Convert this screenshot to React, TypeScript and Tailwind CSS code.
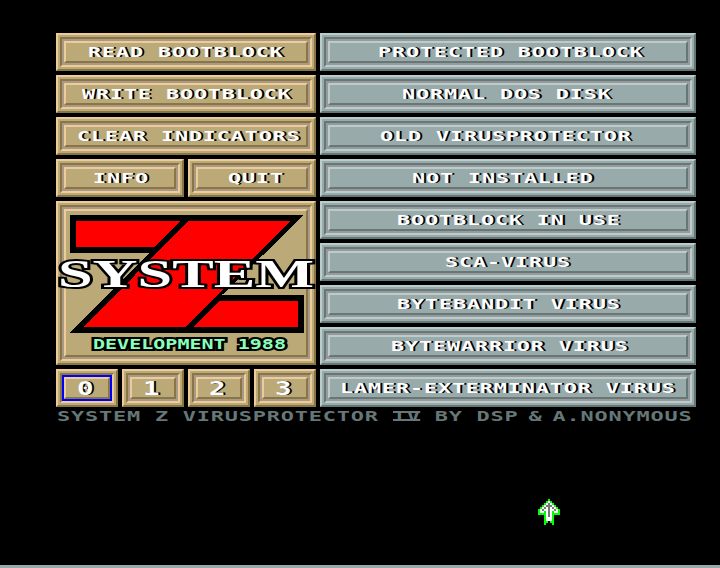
import React from "react";

type Tone = "tan" | "gray";

const tones = {
  tan: {
    r1: "border-t-[#eecc99] border-l-[#eecc99] border-b-[#887744] border-r-[#887744]",
    r2: "border-[#bbaa77]",
    r3: "border-t-[#887744] border-l-[#887744] border-b-[#eecc99] border-r-[#eecc99]",
    r4: "border-[#aa9988]",
    fill: "bg-[#bbaa77]",
  },
  gray: {
    r1: "border-t-[#bbcccc] border-l-[#bbcccc] border-b-[#667777] border-r-[#667777]",
    r2: "border-[#99aaaa]",
    r3: "border-t-[#667777] border-l-[#667777] border-b-[#bbcccc] border-r-[#bbcccc]",
    r4: "border-[#999999]",
    fill: "bg-[#99aaaa]",
  },
};

function Bevel({ tone, className, selected, children }: { tone: Tone; className: string; selected?: boolean; children: React.ReactNode }) {
  const t = tones[tone];
  return (
    <div className={`flex shrink-0 border-2 ${t.r1} ${className}`}>
      <div className={`flex min-w-0 flex-1 border-2 ${t.r2}`}>
        <div className={`flex min-w-0 flex-1 border-2 ${t.r3}`}>
          <div className={`flex min-w-0 flex-1 border-2 ${selected ? "border-[#0000ff]" : t.r4}`}>
            <div className={`flex min-w-0 flex-1 border-2 ${t.r1} ${t.fill}`}>{children}</div>
          </div>
        </div>
      </div>
    </div>
  );
}

const pixelFont =
  "w-max origin-left scale-x-[1.6] whitespace-pre font-['DejaVu_Sans_Mono',monospace] text-[13.7px] font-bold tracking-[0.5px]";

function Label({ pad, children }: { pad: number; children: string }) {
  return (
    <div className="h-[18px] w-0" style={{ paddingLeft: pad }}>
      <span className={`block ${pixelFont} leading-[18px] text-white [text-shadow:0.6px_0_0_#000,1.3px_0_0_#000]`}>{children}</span>
    </div>
  );
}

const actions = [
  { text: "READ BOOTBLOCK", pad: 21.5 },
  { text: "WRITE BOOTBLOCK", pad: 15.5 },
  { text: "CLEAR INDICATORS", pad: 11 },
];

const indicators = [
  { text: "PROTECTED BOOTBLOCK", pad: 47.5 },
  { text: "NORMAL DOS DISK", pad: 71.5 },
  { text: "OLD VIRUSPROTECTOR", pad: 49.5 },
  { text: "NOT INSTALLED", pad: 81.5 },
  { text: "BOOTBLOCK IN USE", pad: 67 },
  { text: "SCA-VIRUS", pad: 115 },
  { text: "BYTEBANDIT VIRUS", pad: 67 },
  { text: "BYTEWARRIOR VIRUS", pad: 61 },
  { text: "LAMER-EXTERMINATOR VIRUS", pad: 10 },
];

function Logo() {
  return (
    <svg className="-m-[10px] h-[164px] w-[260px] shrink-0 overflow-visible" viewBox="56 201 260 164" shapeRendering="crispEdges">
      <path d="M70 215H304L222 295H304V333H70L149 253H70Z" fill="#000" />
      <path d="M76 221H180L154 247H76Z" fill="#f00" />
      <path d="M188 221H290L186 327H84Z" fill="#f00" />
      <path d="M219 301H298V327H194Z" fill="#f00" />
      <text x="58" y="287" textLength="256" lengthAdjust="spacingAndGlyphs" className="font-['Liberation_Serif',serif] text-[40px] font-bold" fill="#fff" stroke="#000" strokeWidth="4" strokeLinejoin="miter" strokeMiterlimit="2" paintOrder="stroke">SYSTEM</text>
      <text x="93" y="349" textLength="193" lengthAdjust="spacingAndGlyphs" className="font-['DejaVu_Sans_Mono',monospace] text-[13.7px] font-bold" fill="#88ffbb" stroke="#000" strokeWidth="4" paintOrder="stroke">DEVELOPMENT 1988</text>
    </svg>
  );
}

const pointerRows = [
  ".....g.....",
  "....gwg....",
  "...gwxwg...",
  "..gwxxxwg..",
  ".gwxwxwxwg.",
  "gwxwwxwwxwg",
  "gwwgwxwgwwg",
  "ggggwxwgggg",
  "...gwxwg...",
  "...gwwwg...",
  "...gwwwg...",
  "...gg.gg...",
  "...g...g...",
];
const pointerInk: Record<string, string> = { g: "#00ff00", w: "#ffffff", x: "#777777" };

function Pointer() {
  return (
    <svg className="h-[26px] w-[22px]" viewBox="0 0 11 13" shapeRendering="crispEdges">
      {pointerRows.flatMap((row, y) =>
        row.split("").map((c, x) => (c in pointerInk ? <rect key={`${x}-${y}`} x={x} y={y} width="1" height="1" fill={pointerInk[c]} /> : null)),
      )}
    </svg>
  );
}

export default function App() {
  return (
    <div className="flex h-[568px] w-[720px] flex-col overflow-hidden bg-black pt-[33px]">
      <main className="flex gap-1 pl-14">
        <section className="flex w-[260px] flex-col gap-1">
          {actions.map((a) => (
            <Bevel key={a.text} tone="tan" className="h-[38px]"><Label pad={a.pad}>{a.text}</Label></Bevel>
          ))}
          <div className="flex gap-1">
            <Bevel tone="tan" className="h-[38px] w-32"><Label pad={27}>INFO</Label></Bevel>
            <Bevel tone="tan" className="h-[38px] w-32"><Label pad={29.5}>QUIT</Label></Bevel>
          </div>
          <Bevel tone="tan" className="h-[164px]"><Logo /></Bevel>
          <div className="flex gap-1">
            {["0", "1", "2", "3"].map((n) => (
              <Bevel key={n} tone="tan" className="h-[38px] w-[62px]" selected={n === "0"}>
                <div className="w-0 pl-[11px]">
                  <span className="block w-max origin-left scale-x-[1.45] font-['DejaVu_Sans_Mono',monospace] text-[19px] leading-[18px] font-bold text-white [text-shadow:0.6px_0_0_#000,1.3px_0_0_#000]">{n}</span>
                </div>
              </Bevel>
            ))}
          </div>
        </section>
        <section className="flex w-[376px] flex-col gap-1">
          {indicators.map((i) => (
            <Bevel key={i.text} tone="gray" className="h-[38px]"><Label pad={i.pad}>{i.text}</Label></Bevel>
          ))}
        </section>
      </main>
      <div className="h-[18px] pl-[57px]">
        <div className={`flex items-center ${pixelFont} leading-[18px] text-[#667777]`}>
          <span>SYSTEM Z VIRUSPROTECTOR</span>
          <span className="ml-[8.75px] h-[10px] border-y-2 border-[#667777] leading-[6px]">IV</span>
          <span className="ml-[8.75px]">BY DSP</span>
          <span className="ml-[6.25px]">&amp;</span>
          <span className="ml-[6.25px]">A.NONYMOUS</span>
        </div>
      </div>
      <div className="mt-[74px] pl-[538px]"><Pointer /></div>
      <div className="mt-auto h-[3px] shrink-0 bg-[#99aaaa]" />
    </div>
  );
}
